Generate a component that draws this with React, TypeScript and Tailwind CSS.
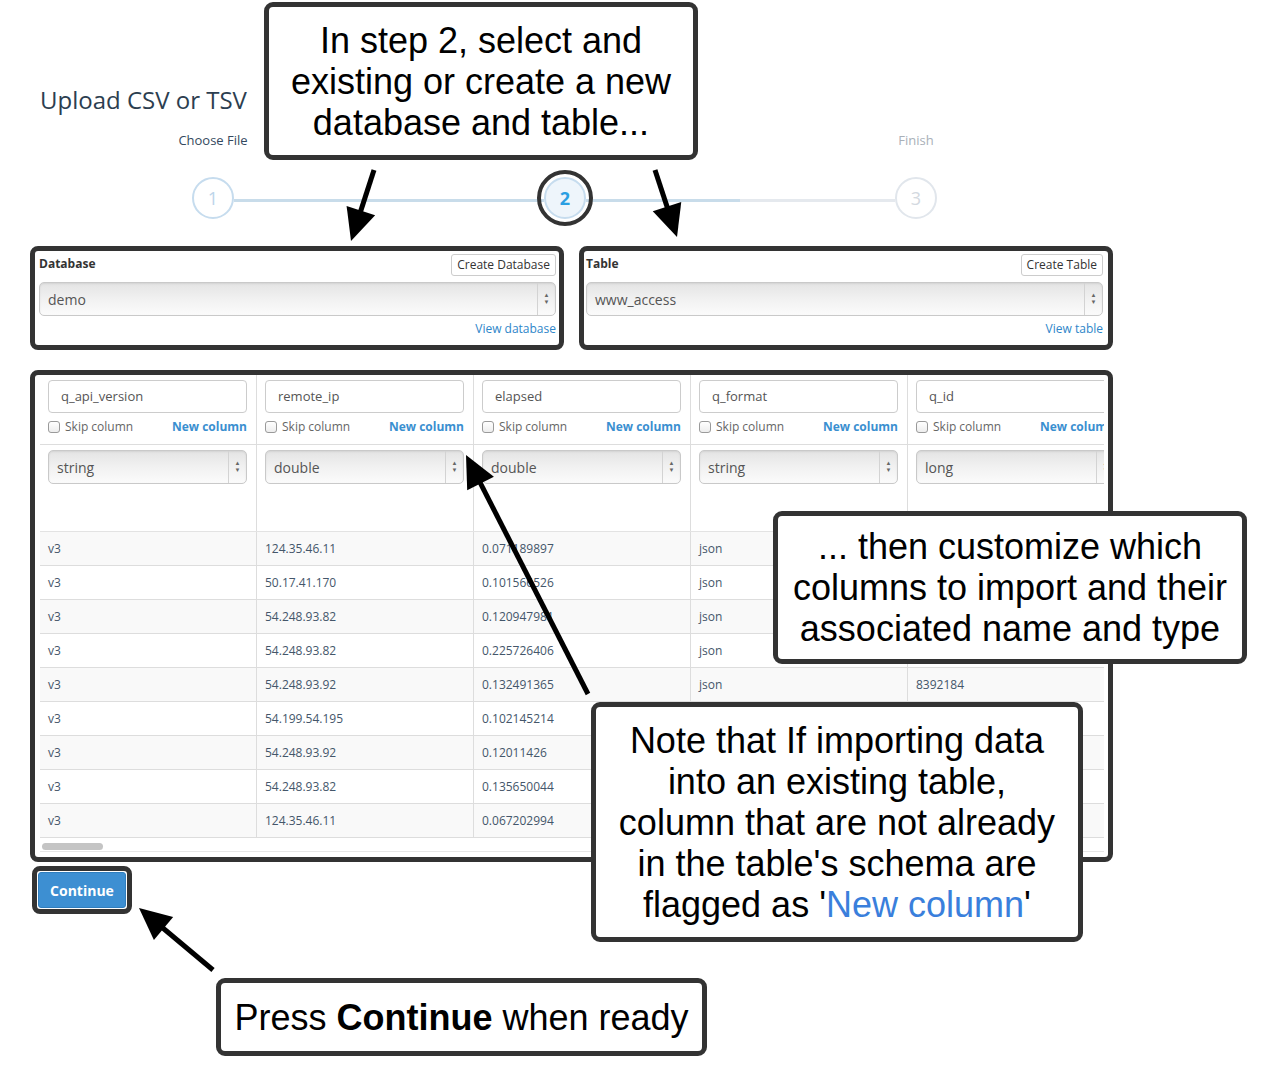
import React from "react"

const columns = [
  { name: "q_api_version", type: "string" },
  { name: "remote_ip", type: "double" },
  { name: "elapsed", type: "double" },
  { name: "q_format", type: "string" },
  { name: "q_id", type: "long" },
]

const rows = [
  ["v3", "124.35.46.11", "0.071189897", "json", "8392180"],
  ["v3", "50.17.41.170", "0.101566526", "json", "8392181"],
  ["v3", "54.248.93.82", "0.120947981", "json", "8392182"],
  ["v3", "54.248.93.82", "0.225726406", "json", "8392183"],
  ["v3", "54.248.93.92", "0.132491365", "json", "8392184"],
  ["v3", "54.199.54.195", "0.102145214", "json", "8392185"],
  ["v3", "54.248.93.92", "0.12011426", "json", "8392186"],
  ["v3", "54.248.93.82", "0.135650044", "json", "8392187"],
  ["v3", "124.35.46.11", "0.067202994", "json", "8392188"],
]

function SelectBox({ value }: { value: string }) {
  return (
    <div className="flex h-[34px] items-stretch rounded-[5px] border border-[#c9c9c9] bg-gradient-to-b from-[#e4e4e4] via-[#f1f1f1] to-[#fbfbfb] shadow-[inset_0_1px_2px_rgba(0,0,0,0.08)]">
      <div className="flex flex-1 items-center pl-[8px] text-[14px] text-[#555]">{value}</div>
      <div className="flex w-[18px] flex-col items-center justify-center border-l border-[#d3d3d3] text-[6px] leading-[7px] text-[#666]">
        <span>▲</span>
        <span>▼</span>
      </div>
    </div>
  )
}

function Steps() {
  return (
    <div className="ml-[162px]">
      {/* labels */}
      <div className="mt-[17px] flex text-[13px] leading-[18px]">
        <div className="flex w-[42px] justify-center whitespace-nowrap text-[#34495e]">Choose File</div>
        <div className="w-[310px]" />
        <div className="flex w-[42px] justify-center whitespace-nowrap text-[#34495e]">Select Table</div>
        <div className="w-[309px]" />
        <div className="flex w-[42px] justify-center whitespace-nowrap text-[#a9b0b8]">Finish</div>
      </div>
      {/* circles */}
      <div className="mt-[28px] flex items-center">
        <div className="flex h-[42px] w-[42px] items-center justify-center rounded-full border-2 border-[#c6dcee] bg-white text-[18px] text-[#bcd5ea]">
          1
        </div>
        <div className="mt-[5px] h-[3px] w-[310px] bg-[#c8dcea]" />
        <div className="relative h-[42px] w-[42px]">
          <div className="absolute -inset-[7px] rounded-full border-[4px] border-[#333]" />
          <div className="flex h-[42px] w-[42px] items-center justify-center rounded-full border-2 border-[#c6dcee] bg-[#eef5fb] text-[18px] font-bold text-[#2a9fe2]">
            2
          </div>
        </div>
        <div className="mt-[5px] flex h-[3px] w-[309px]">
          <div className="w-[154px] bg-[#c8dcea]" />
          <div className="flex-1 bg-[#e5e9ee]" />
        </div>
        <div className="flex h-[42px] w-[42px] items-center justify-center rounded-full border-2 border-[#e1e6ec] bg-white text-[18px] text-[#d3d9e0]">
          3
        </div>
      </div>
    </div>
  )
}

function Picker({
  label,
  button,
  value,
  link,
  pad,
}: {
  label: string
  button: string
  value: string
  link: string
  pad: string
}) {
  return (
    <div className={`h-[104px] w-[534px] rounded-[8px] border-[5px] border-[#333] pt-[3px] ${pad}`}>
      <div className="flex items-start justify-between">
        <span className="mt-[2px] text-[12px] font-bold leading-[16px] text-[#333]">{label}</span>
        <span className="h-[22px] rounded-[3px] border border-[#ccc] bg-white px-[5px] text-[12px] leading-[20px] text-[#333]">
          {button}
        </span>
      </div>
      <div className="mt-[6px]">
        <SelectBox value={value} />
      </div>
      <div className="mt-[5px] text-right text-[12px] leading-[16px] text-[#2e86c9]">{link}</div>
    </div>
  )
}

function ColumnsTable() {
  return (
    <div className="mt-[20px] w-[1083px] rounded-[8px] border-[5px] border-[#333] pb-[5px] pl-[5px] pr-[4px]">
      <div className="w-[1064px] overflow-hidden">
        {/* name row */}
        <div className="flex w-max border-b border-[#ddd]">
          {columns.map((c) => (
            <div key={c.name} className="w-[217px] shrink-0 border-r border-[#ddd] pb-[9px] pl-[8px] pr-[9px] pt-[5px]">
              <div className="flex h-[33px] items-center rounded-[4px] border border-[#ccc] bg-white pl-[12px] text-[13px] text-[#555]">
                {c.name}
              </div>
              <div className="mt-[6px] flex h-[16px] items-center justify-between text-[12px]">
                <span className="flex items-center">
                  <span className="mr-[5px] h-[12px] w-[12px] rounded-[3px] border border-[#9a9a9a] bg-gradient-to-b from-white to-[#ededed]" />
                  <span className="text-[#666]">Skip column</span>
                </span>
                <span className="font-bold text-[#3a8fd0]">New column</span>
              </div>
            </div>
          ))}
        </div>
        {/* type row */}
        <div className="flex w-max border-b border-[#e3e3e3]">
          {columns.map((c) => (
            <div key={c.name} className="h-[86px] w-[217px] shrink-0 border-r border-[#ddd] pl-[8px] pr-[9px] pt-[5px]">
              <SelectBox value={c.type} />
            </div>
          ))}
        </div>
        {/* data */}
        {rows.map((r, i) => (
          <div key={i} className={`flex w-max border-b border-[#ddd] ${i % 2 === 0 ? "bg-[#f9f9f9]" : "bg-white"}`}>
            {r.map((v, j) => (
              <div
                key={j}
                className="flex h-[33px] w-[217px] shrink-0 items-center border-r border-[#ddd] px-[8px] text-[12px] text-[#44566a]"
              >
                {v}
              </div>
            ))}
          </div>
        ))}
        {/* scrollbar */}
        <div className="h-[14px] border-b border-[#e6e6e6] pl-[2px] pt-[5px]">
          <div className="h-[7px] w-[61px] rounded-full bg-[#c4c4c4]" />
        </div>
      </div>
    </div>
  )
}

function Arrow({ x1, y1, x2, y2, w = 15, l = 32 }: { x1: number; y1: number; x2: number; y2: number; w?: number; l?: number }) {
  const dx = x2 - x1
  const dy = y2 - y1
  const len = Math.hypot(dx, dy)
  const ux = dx / len
  const uy = dy / len
  const bx = x2 - ux * l
  const by = y2 - uy * l
  const px = -uy
  const py = ux
  return (
    <g>
      <line x1={x1} y1={y1} x2={bx + ux * 4} y2={by + uy * 4} stroke="#000" strokeWidth={5} />
      <polygon points={`${x2},${y2} ${bx + px * w},${by + py * w} ${bx - px * w},${by - py * w}`} fill="#000" />
    </g>
  )
}

const callout =
  "absolute flex items-center justify-center rounded-[9px] border-[5px] border-[#333] bg-white text-center font-['Liberation_Sans',Arial,sans-serif] text-[36px] leading-[41px] text-black whitespace-nowrap"

export default function App() {
  return (
    <div className="relative h-[1074px] w-[1264px] overflow-hidden bg-white font-['Open_Sans',sans-serif]">
      <div className="pl-[30px] pt-[86px]">
        <h1 className="pl-[10px] text-[24px] leading-[28px] text-[#2c3e50]">Upload CSV or TSV</h1>
        <Steps />
        <div className="mt-[27px] flex gap-[15px]">
          <Picker label="Database" button="Create Database" value="demo" link="View database" pad="pl-[4px] pr-[3px]" />
          <Picker label="Table" button="Create Table" value="www_access" link="View table" pad="pl-[2px] pr-[5px]" />
        </div>
        <ColumnsTable />
        <div className="ml-[2px] mt-[4px] inline-flex rounded-[8px] border-[5px] border-[#333] p-[1px]">
          <button className="h-[36px] w-[88px] rounded-[3px] border border-[#2f7dbd] bg-[#3d8fd2] text-[14px] font-bold text-white">
            Continue
          </button>
        </div>
      </div>

      {/* annotations */}
      <div className={`${callout} left-[264px] top-[2px] h-[158px] w-[434px]`}>
        <p>
          In step 2, select and
          <br />
          existing or create a new
          <br />
          database and table...
        </p>
      </div>
      <div className={`${callout} left-[773px] top-[511px] h-[153px] w-[474px]`}>
        <p>
          ... then customize which
          <br />
          columns to import and their
          <br />
          associated name and type
        </p>
      </div>
      <div className={`${callout} left-[591px] top-[702px] h-[240px] w-[492px]`}>
        <p>
          Note that If importing data
          <br />
          into an existing table,
          <br />
          column that are not already
          <br />
          in the table's schema are
          <br />
          flagged as '<span className="text-[#3a7fdc]">New column</span>'
        </p>
      </div>
      <div className={`${callout} left-[216px] top-[978px] h-[78px] w-[491px]`}>
        <p>
          Press <b>Continue</b> when ready
        </p>
      </div>

      <svg className="pointer-events-none absolute left-0 top-0" width={1264} height={1074}>
        <Arrow x1={374} y1={170} x2={351} y2={241} />
        <Arrow x1={655} y1={170} x2={677} y2={237} />
        <Arrow x1={588} y1={694} x2={466} y2={455} />
        <Arrow x1={213} y1={970} x2={139} y2={908} />
      </svg>
    </div>
  )
}
